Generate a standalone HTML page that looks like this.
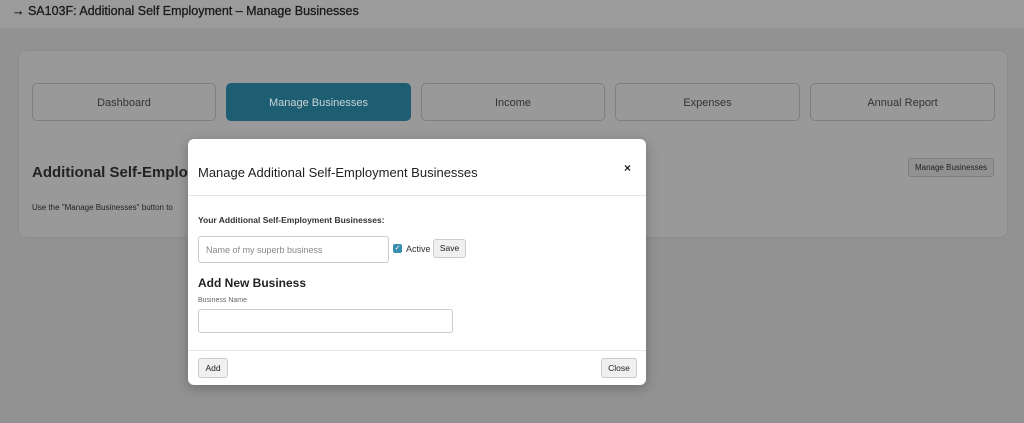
<!DOCTYPE html>
<html><head><meta charset="utf-8"><style>
*{box-sizing:border-box;margin:0;padding:0}
body{width:1024px;height:423px;overflow:hidden;background:#929292;font-family:"Liberation Sans",sans-serif;position:relative;color:#222}
.top{position:absolute;left:0;top:0;width:1024px;height:28px;background:#9b9b9b}
.top span{position:absolute;left:12px;top:4px;font-size:12.5px;color:#1a1a1a;-webkit-text-stroke:0.3px #1a1a1a}
.card{position:absolute;left:18px;top:50px;width:990px;height:188px;background:#999;border:1px solid #8c8c8c;border-radius:8px}
.tab{position:absolute;top:83px;height:38px;border:1px solid #7f7f7f;border-radius:5px;font-size:11px;color:#333;text-align:center;line-height:38px;background:#999}
.tab.a{background:#1e5e73;border-color:#1e5e73;color:#c9d4d8}
.h{position:absolute;left:32px;top:164px;font-size:15px;font-weight:bold;color:#222}
.p{position:absolute;left:32px;top:203px;font-size:8px;color:#222}
.mb{position:absolute;left:908px;top:158px;width:86px;height:19px;border:1px solid #7f7f7f;border-radius:3px;font-size:8px;line-height:17px;text-align:center;background:#919191;color:#222}
.m{position:absolute;left:188px;top:139px;width:458px;height:246px;background:#fff;border-radius:6px;box-shadow:0 3px 12px rgba(0,0,0,.25)}
.m .t{position:absolute;left:10px;top:26px;font-size:13px;color:#222}
.m .x{position:absolute;left:436px;top:22px;font-size:12px;font-weight:bold}
.hr{position:absolute;left:0;width:458px;height:1px;background:#e6e6e6}
.lab{position:absolute;left:10px;top:76px;font-size:8.5px;font-weight:bold;color:#333}
.in{position:absolute;border:1px solid #ccc;border-radius:3px;background:#fff}
.btn{position:absolute;border:1px solid #ccc;border-radius:3px;background:#f0f0f0;font-size:8.5px;text-align:center;color:#222}
</style></head><body>
<div class="top"><span>→ SA103F: Additional Self Employment – Manage Businesses</span></div>
<div class="card"></div>
<div class="tab" style="left:32px;width:184px">Dashboard</div>
<div class="tab a" style="left:226px;width:185px">Manage Businesses</div>
<div class="tab" style="left:421px;width:184px">Income</div>
<div class="tab" style="left:615px;width:185px">Expenses</div>
<div class="tab" style="left:810px;width:185px">Annual Report</div>
<div class="h">Additional Self-Employment</div>
<div class="p">Use the "Manage Businesses" button to</div>
<div class="mb">Manage Businesses</div>
<div class="m">
<div class="t">Manage Additional Self-Employment Businesses</div>
<div class="x">×</div>
<div class="hr" style="top:56px"></div>
<div class="lab">Your Additional Self-Employment Businesses:</div>
<div class="in" style="left:10px;top:97px;width:191px;height:27px;font-size:9px;color:#888;padding:8px 0 0 7px">Name of my superb business</div>
<div style="position:absolute;left:205px;top:105px;width:9px;height:9px;background:#3a8fb0;border-radius:2px;color:#fff;font-size:7px;line-height:9px;text-align:center">✓</div>
<div style="position:absolute;left:218px;top:105px;font-size:9px;color:#333">Active</div>
<div class="btn" style="left:245px;top:100px;width:33px;height:19px;line-height:17px">Save</div>
<div style="position:absolute;left:10px;top:137px;font-size:12px;font-weight:bold;color:#222">Add New Business</div>
<div style="position:absolute;left:10px;top:158px;font-size:7px;color:#666">Business Name</div>
<div class="in" style="left:10px;top:170px;width:255px;height:24px"></div>
<div class="hr" style="top:211px"></div>
<div class="btn" style="left:10px;top:219px;width:30px;height:20px;line-height:18px">Add</div>
<div class="btn" style="left:413px;top:219px;width:36px;height:20px;line-height:18px">Close</div>
</div>
</body></html>
